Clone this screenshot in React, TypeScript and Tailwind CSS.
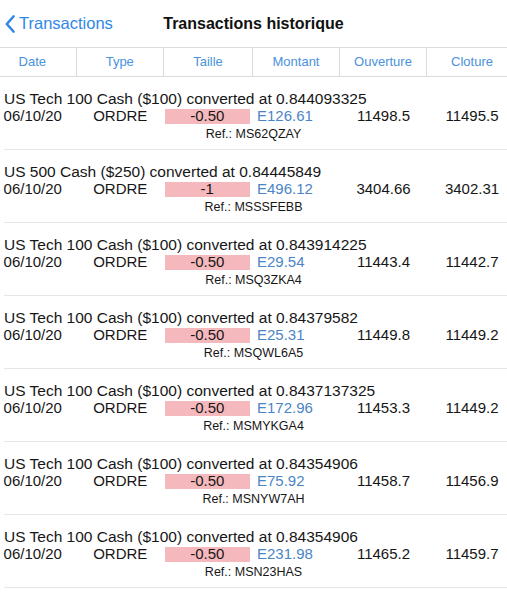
import React from "react";

type Transaction = {
	instrument: string;
	rate: string;
	date: string;
	type: string;
	taille: string;
	montant: string;
	ouverture: string;
	cloture: string;
	ref: string;
};

const transactions: Transaction[] = [
	{ instrument: "US Tech 100 Cash ($100)", rate: "0.844093325", date: "06/10/20", type: "ORDRE", taille: "-0.50", montant: "E126.61", ouverture: "11498.5", cloture: "11495.5", ref: "MS62QZAY" },
	{ instrument: "US 500 Cash ($250)", rate: "0.84445849", date: "06/10/20", type: "ORDRE", taille: "-1", montant: "E496.12", ouverture: "3404.66", cloture: "3402.31", ref: "MSSSFEBB" },
	{ instrument: "US Tech 100 Cash ($100)", rate: "0.843914225", date: "06/10/20", type: "ORDRE", taille: "-0.50", montant: "E29.54", ouverture: "11443.4", cloture: "11442.7", ref: "MSQ3ZKA4" },
	{ instrument: "US Tech 100 Cash ($100)", rate: "0.84379582", date: "06/10/20", type: "ORDRE", taille: "-0.50", montant: "E25.31", ouverture: "11449.8", cloture: "11449.2", ref: "MSQWL6A5" },
	{ instrument: "US Tech 100 Cash ($100)", rate: "0.8437137325", date: "06/10/20", type: "ORDRE", taille: "-0.50", montant: "E172.96", ouverture: "11453.3", cloture: "11449.2", ref: "MSMYKGA4" },
	{ instrument: "US Tech 100 Cash ($100)", rate: "0.84354906", date: "06/10/20", type: "ORDRE", taille: "-0.50", montant: "E75.92", ouverture: "11458.7", cloture: "11456.9", ref: "MSNYW7AH" },
	{ instrument: "US Tech 100 Cash ($100)", rate: "0.84354906", date: "06/10/20", type: "ORDRE", taille: "-0.50", montant: "E231.98", ouverture: "11465.2", cloture: "11459.7", ref: "MSN23HAS" },
];

const columns = ["Date", "Type", "Taille", "Montant", "Ouverture", "Cloture"];
// the table is a bit wider than the screen and scrolled 11px to the left
const colWidths = ["w-[87.5px]", "w-[87.5px]", "w-[89px]", "w-[87px]", "w-[87px]", "w-[90px]"];

function NavBar() {
	return (
		<div className="relative flex h-[47px] items-center">
			<button className="flex items-center pl-[5px] text-[#2f88e8]">
				<svg width="10" height="18" viewBox="0 0 10 18" fill="none">
					<path d="M8.5 1.5L1.8 9L8.5 16.5" stroke="currentColor" strokeWidth="2.6" strokeLinecap="round" strokeLinejoin="round" />
				</svg>
				<span className="ml-[4px] text-[16.5px] leading-none">Transactions</span>
			</button>
			<h1 className="absolute left-0 right-0 text-center text-[16px] font-bold text-[#111]">
				Transactions historique
			</h1>
		</div>
	);
}

function TableHeader() {
	return (
		<div className="overflow-hidden border-y border-[#dcdcdc]">
			<div className="-ml-[11px] flex h-[28px] w-[528px]">
				{columns.map((col, i) => (
					<div
						key={col}
						className={`${colWidths[i]} flex shrink-0 items-center justify-center text-[13px] text-[#4a92dc] ${i < 5 ? "border-r border-[#dcdcdc]" : ""}`}
					>
						{col}
					</div>
				))}
			</div>
		</div>
	);
}

function TransactionRow({ t }: { t: Transaction }) {
	return (
		<div className="ml-[4px] h-[73px] border-b border-[#e6e6e6] pt-[13px]">
			<p className="text-[15.5px] leading-[17px] text-[#161616]">
				{t.instrument} converted at {t.rate}
			</p>
			<div className="-ml-[15px] mt-[2px] flex h-[15px] w-[528px] items-center text-[15px] text-[#161616]">
				<div className={`${colWidths[0]} shrink-0 text-center`}>{t.date}</div>
				<div className={`${colWidths[1]} shrink-0 text-center`}>{t.type}</div>
				<div className={`${colWidths[2]} shrink-0 pr-[3px] pl-[0.5px]`}>
					<div className="flex h-[15px] items-center justify-center bg-[#f5b9bd]">{t.taille}</div>
				</div>
				<div className={`${colWidths[3]} shrink-0 pl-[4px] text-[#4b85c6]`}>{t.montant}</div>
				<div className={`${colWidths[4]} shrink-0 text-center`}>{t.ouverture}</div>
				<div className={`${colWidths[5]} shrink-0 text-center`}>{t.cloture}</div>
			</div>
			<p className="-ml-[4px] mt-[3px] text-center text-[12.5px] leading-[15px] text-[#161616]">
				Ref.: {t.ref}
			</p>
		</div>
	);
}

export default function App() {
	return (
		<div className="h-[592px] w-[507px] overflow-hidden bg-white font-['Liberation_Sans',Arial,sans-serif]">
			<NavBar />
			<TableHeader />
			<div className="overflow-hidden">
				{transactions.map((t) => (
					<TransactionRow key={t.ref} t={t} />
				))}
			</div>
		</div>
	);
}
